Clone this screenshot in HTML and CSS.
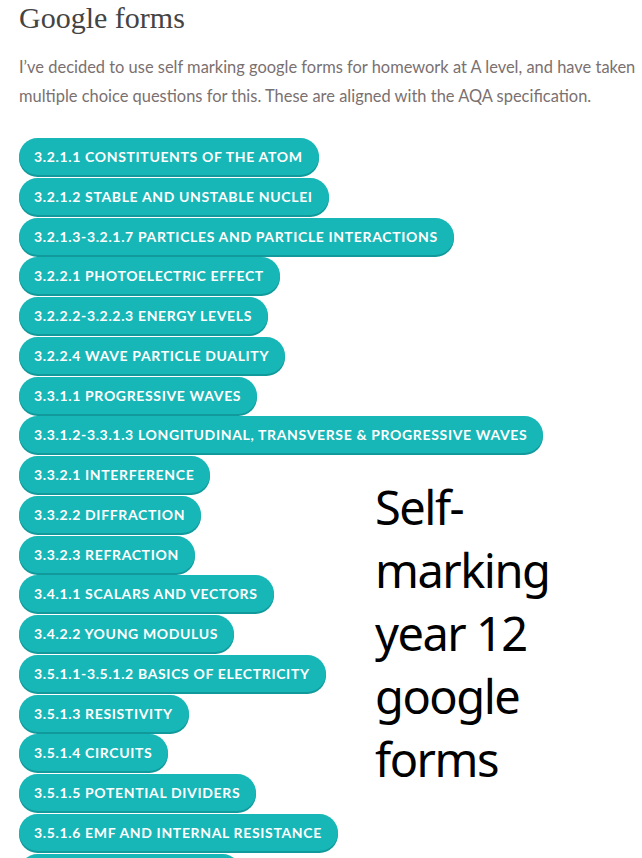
FILE: index.html
```html
<!DOCTYPE html>
<html lang="en">
<head>
  <meta charset="UTF-8">
  <meta name="viewport" content="width=device-width, initial-scale=1.0">
  <title>Google forms</title>
  <link rel="stylesheet" href="styles.css">
</head>
<body>
  <div class="entry">
    <h2 class="entry-title">Google forms</h2>
    <p class="entry-intro">I’ve decided to use self marking google forms for homework at A level, and have taken<br>multiple choice questions for this. These are aligned with the AQA specification.</p>

    <div class="form-links">
      <a class="form-button" href="#">3.2.1.1 Constituents of the atom</a>
      <a class="form-button" href="#">3.2.1.2 Stable and unstable nuclei</a>
      <a class="form-button" href="#">3.2.1.3-3.2.1.7 Particles and particle interactions</a>
      <a class="form-button" href="#">3.2.2.1 Photoelectric effect</a>
      <a class="form-button" href="#">3.2.2.2-3.2.2.3 Energy levels</a>
      <a class="form-button" href="#">3.2.2.4 Wave particle duality</a>
      <a class="form-button" href="#">3.3.1.1 Progressive waves</a>
      <a class="form-button" href="#">3.3.1.2-3.3.1.3 Longitudinal, transverse &amp; progressive waves</a>

      <!-- tile floats beside the shorter buttons below -->
      <div class="tile">Self-marking year 12 google forms</div>

      <a class="form-button" href="#">3.3.2.1 Interference</a>
      <a class="form-button" href="#">3.3.2.2 Diffraction</a>
      <a class="form-button" href="#">3.3.2.3 Refraction</a>
      <a class="form-button" href="#">3.4.1.1 Scalars and vectors</a>
      <a class="form-button" href="#">3.4.2.2 Young modulus</a>
      <a class="form-button" href="#">3.5.1.1-3.5.1.2 Basics of electricity</a>
      <a class="form-button" href="#">3.5.1.3 Resistivity</a>
      <a class="form-button" href="#">3.5.1.4 Circuits</a>
      <a class="form-button" href="#">3.5.1.5 Potential dividers</a>
      <a class="form-button" href="#">3.5.1.6 EMF and internal resistance</a>
      <a class="form-button" href="#">3.6.1.1 Circular motion</a>
    </div>
  </div>
</body>
</html>
```

FILE: styles.css
```css
:root {
  --teal: #17b6b7;
  --teal-dark: #11999b;
  --heading: #444444;
  --body-text: #7a7070;
}

* {
  box-sizing: border-box;
}

html,
body {
  height: 100%;
  overflow: hidden;
}

body {
  margin: 0;
  background-color: #ffffff;
  font-family: Lato, "Open Sans", sans-serif;
}

.entry {
  padding: 0 0 0 19px;
}

.entry-title {
  margin: 0;
  font-family: "Liberation Serif", serif;
  font-size: 30px;
  font-weight: 400;
  line-height: 36px;
  color: var(--heading);
}

.entry-intro {
  margin: 17px 0 0;
  font-size: 16.45px;
  line-height: 29px;
  color: var(--body-text);
  white-space: nowrap;
}

.form-links {
  margin-top: 27px;
}

.form-button {
  display: block;
  width: fit-content;
  height: 37px;
  margin-bottom: 2.76px;
  padding: 0 16px 0 15px;
  border-radius: 19px;
  background-color: var(--teal);
  box-shadow: 0 2px 0 var(--teal-dark);
  color: #ffffff;
  font-size: 14px;
  font-weight: 700;
  line-height: 37px;
  letter-spacing: 0.65px;
  text-transform: uppercase;
  text-decoration: none;
  white-space: nowrap;
}

.tile {
  float: right;
  width: 267px;
  margin-top: 20px;
  padding-right: 80px;
  font-family: "Noto Sans", sans-serif;
  font-size: 47px;
  line-height: 63px;
  letter-spacing: -1.5px;
  color: #000000;
}
```
